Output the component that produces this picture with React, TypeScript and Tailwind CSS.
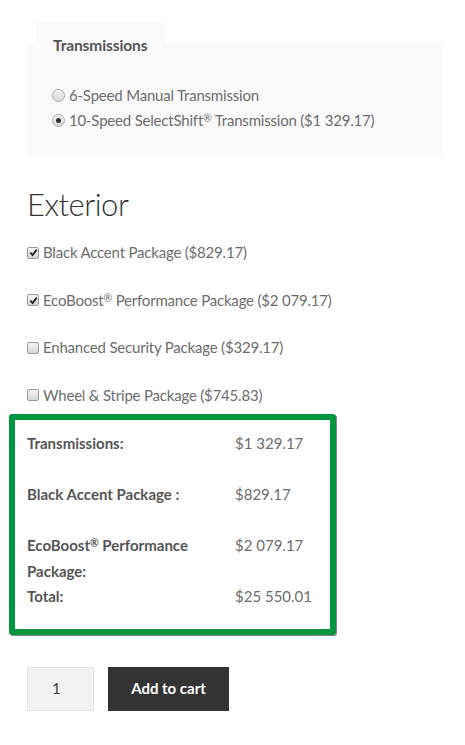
import React from "react";

const font = { fontFamily: "Lato, 'Open Sans', sans-serif" };

function Radio({ checked }: { checked?: boolean }) {
  return (
    <span className="inline-flex h-[13px] w-[13px] shrink-0 items-center justify-center rounded-full border border-[#a9a9a9] bg-gradient-to-b from-[#f4f4f4] to-[#d9d9d9]">
      {checked && <span className="h-[5px] w-[5px] rounded-full bg-[#333]" />}
    </span>
  );
}

function Checkbox({ checked }: { checked?: boolean }) {
  return (
    <span className="inline-flex h-[12px] w-[12px] shrink-0 items-center justify-center rounded-[2px] border border-[#9a9a9a] bg-gradient-to-b from-[#f6f6f6] to-[#d6d6d6]">
      {checked && (
        <svg width="9" height="9" viewBox="0 0 10 10">
          <path d="M1.5 5.2 L4 7.8 L8.6 1.8" fill="none" stroke="#222" strokeWidth="2" />
        </svg>
      )}
    </span>
  );
}

// small raised ® like the reference
const Reg = () => <span className="relative -top-[0.35em] text-[0.7em] leading-none">®</span>;

const packages = [
  { label: <>Black Accent Package ($829.17)</>, checked: true },
  { label: <>EcoBoost<Reg /> Performance Package ($2 079.17)</>, checked: true },
  { label: <>Enhanced Security Package ($329.17)</>, checked: false },
  { label: <>Wheel &amp; Stripe Package ($745.83)</>, checked: false },
];

export default function App() {
  return (
    <div className="min-h-[745px] bg-white text-[#6d6d6d]" style={font}>
      <div className="px-[27px] pt-[22px] pr-[23px]">
        {/* fieldset with legend tab */}
        <div className="ml-[9px] h-[22px] w-[130px] bg-[#fafafa]">
          <div className="pl-[17px] pt-[13px] text-[15.5px] font-bold leading-[20px] tracking-[-0.1px] text-[#555]">
            Transmissions
          </div>
        </div>
        <div className="h-[113px] bg-[#fafafa] pl-[25px] pt-[39px] text-[15px] leading-[25px] tracking-[-0.2px]">
          <label className="flex items-center gap-[4px]">
            <Radio />
            <span>6-Speed Manual Transmission</span>
          </label>
          <label className="flex items-center gap-[4px]">
            <Radio checked />
            <span>10-Speed SelectShift<Reg /> Transmission ($1 329.17)</span>
          </label>
        </div>

        <h2 className="mt-[27px] text-[31px] font-light leading-[40px] tracking-[-0.5px] text-[#333]">Exterior</h2>

        <div className="mt-[16px] flex flex-col gap-[22px] text-[15px] leading-[25.5px] tracking-[-0.2px]">
          {packages.map((p, i) => (
            <label key={i} className="flex items-center gap-[4px]">
              <Checkbox checked={p.checked} />
              <span>{p.label}</span>
            </label>
          ))}
        </div>
      </div>

      <div className="ml-[9px] mt-[6px] w-[327px] rounded-[3px] border-[6px] border-[#00963f] px-[12px] pb-[19px] pt-[11px] text-[15px] leading-[25.5px] shadow-[1px_1px_0_#888]">
        <div className="grid grid-cols-[208px_1fr]">
          <div className="h-[51px] font-bold text-[#555]">Transmissions:</div>
          <div className="h-[51px]">$1 329.17</div>
          <div className="h-[51px] font-bold text-[#555]">Black Accent Package :</div>
          <div className="h-[51px]">$829.17</div>
          <div className="font-bold text-[#555]">EcoBoost<Reg /> Performance Package:</div>
          <div>$2 079.17</div>
          <div className="font-bold text-[#555]">Total:</div>
          <div>$25 550.01</div>
        </div>
      </div>

      <div className="mt-[32px] flex gap-[14px] pl-[27px]">
        <div className="flex h-[44px] w-[67px] items-center border border-[#e6e6e6] bg-[#f2f2f2] pl-[24px] text-[15px] text-[#444]">
          1
        </div>
        <button className="h-[44px] w-[121px] bg-[#333] text-[15px] font-bold text-white">Add to cart</button>
      </div>
    </div>
  );
}
